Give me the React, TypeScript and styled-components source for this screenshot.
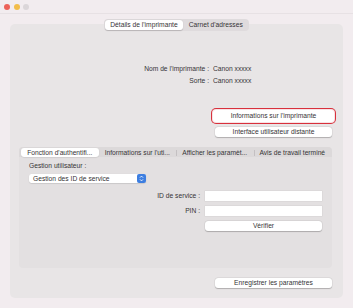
import styled, { createGlobalStyle } from "styled-components";

const GlobalStyle = createGlobalStyle`
  html, body {
    margin: 0;
    padding: 0;
  }
  body {
    width: 353px;
    height: 308px;
    overflow: hidden;
    background: #f2ecef;
    font-family: "Liberation Sans", Arial, sans-serif;
  }
`;

const Window = styled.div`
  width: 353px;
  height: 308px;
  display: flex;
  flex-direction: column;
  background: #f2ecef;
  color: #363436;
  font-size: 6.7px;
`;

const TitleBar = styled.div`
  flex: none;
  height: 14px;
  box-sizing: border-box;
  border-bottom: 1px solid #e7e1e4;
  display: flex;
  align-items: center;
  gap: 3.5px;
  padding-left: 4px;
`;

const Light = styled.span<{ $color: string }>`
  width: 6px;
  height: 6px;
  border-radius: 50%;
  background: ${(p) => p.$color};
`;

const Main = styled.div`
  flex: 1;
  display: flex;
  flex-direction: column;
  padding: 5px 10px 0 10px;
`;

const Segmented = styled.div`
  align-self: center;
  position: relative;
  z-index: 1;
  display: flex;
  height: 12px;
  box-sizing: border-box;
  padding: 1px;
  margin-bottom: -7px;
  border-radius: 4px;
  background: #dfdbdd;
`;

const Segment = styled.div<{ $active?: boolean }>`
  padding: 0 5.5px;
  line-height: 10px;
  border-radius: 3px;
  white-space: nowrap;
  background: ${(p) => (p.$active ? "#ffffff" : "transparent")};
  box-shadow: ${(p) => (p.$active ? "0 0.5px 1px rgba(0,0,0,0.18)" : "none")};
`;

const Panel = styled.div`
  height: 274px;
  box-sizing: border-box;
  border-radius: 5px;
  background: #e8e5e6;
  padding: 39px 11px 0 9px;
  display: flex;
  flex-direction: column;
`;

const InfoGrid = styled.div`
  display: grid;
  grid-template-columns: 190px auto;
  column-gap: 4px;
  line-height: 12px;
`;

const InfoLabel = styled.div`
  text-align: right;
`;

const ButtonStack = styled.div`
  align-self: flex-end;
  width: 117px;
  margin-top: 23px;
  display: flex;
  flex-direction: column;
  align-items: center;
  gap: 5px;
`;

const Button = styled.div<{ $focused?: boolean; $width?: number }>`
  width: ${(p) => (p.$focused ? "121px" : `${p.$width ?? 117}px`)};
  height: ${(p) => (p.$focused ? "12px" : "10px")};
  line-height: ${(p) => (p.$focused ? "12px" : "10px")};
  flex: none;
  text-align: center;
  white-space: nowrap;
  background: #ffffff;
  border-radius: 3px;
  box-shadow: ${(p) =>
    p.$focused
      ? "0 0 0 1px #f7e3e5, 0 0 0 2px #d8303c"
      : "0 0.5px 1px rgba(0,0,0,0.22), 0 0 0 0.5px rgba(0,0,0,0.06)"};
`;

const TabPanel = styled.div`
  margin-top: 10px;
  height: 121px;
  border-radius: 4px;
  background: #e3e0e1;
  display: flex;
  flex-direction: column;
  overflow: hidden;
`;

const TabBar = styled.div`
  flex: none;
  height: 10px;
  box-sizing: border-box;
  padding: 1px 1px 0 2px;
  background: #dcd9da;
  display: flex;
`;

const Tab = styled.div<{ $active?: boolean; $divider?: boolean }>`
  flex: 1;
  position: relative;
  text-align: center;
  line-height: 9px;
  white-space: nowrap;
  border-radius: 3px;
  background: ${(p) => (p.$active ? "#ffffff" : "transparent")};
  box-shadow: ${(p) => (p.$active ? "0 0.5px 1px rgba(0,0,0,0.15)" : "none")};
  &::before {
    content: "";
    display: ${(p) => (p.$divider ? "block" : "none")};
    position: absolute;
    left: 0;
    top: 2px;
    height: 6px;
    width: 1px;
    background: #c4c0c2;
  }
`;

const TabContent = styled.div`
  display: flex;
  flex-direction: column;
  padding: 3px 10px 0 10px;
`;

const SectionLabel = styled.div`
  line-height: 11px;
`;

const Popup = styled.div`
  margin-top: 3px;
  width: 117px;
  height: 9px;
  display: flex;
  align-items: center;
  justify-content: space-between;
  background: #ffffff;
  border-radius: 2.5px;
  box-shadow: 0 0.5px 1px rgba(0,0,0,0.2);
  padding-left: 4px;
  box-sizing: border-box;
`;

const Stepper = styled.span`
  width: 9px;
  height: 9px;
  border-radius: 2px;
  background: #3d7ee0;
  display: flex;
  align-items: center;
  justify-content: center;
`;

const FieldGrid = styled.div`
  margin-top: 8px;
  display: grid;
  grid-template-columns: 1fr 117px;
  column-gap: 5px;
  row-gap: 5px;
`;

const FieldLabel = styled.div`
  text-align: right;
  line-height: 10px;
`;

const Field = styled.div`
  height: 10px;
  background: #ffffff;
  box-shadow: 0 0 0 0.5px #d6d2d4;
`;

const Footer = styled.div`
  margin-top: 10px;
  align-self: flex-end;
`;

export default function App() {
  return (
    <Window>
      <GlobalStyle />
      <TitleBar>
        <Light $color="#ec6159" />
        <Light $color="#f2bd4b" />
        <Light $color="#dbd6d9" />
      </TitleBar>
      <Main>
        <Segmented>
          <Segment $active>Détails de l'imprimante</Segment>
          <Segment>Carnet d'adresses</Segment>
        </Segmented>
        <Panel>
          <InfoGrid>
            <InfoLabel>Nom de l'imprimante :</InfoLabel>
            <div>Canon xxxxx</div>
            <InfoLabel>Sorte :</InfoLabel>
            <div>Canon xxxxx</div>
          </InfoGrid>
          <ButtonStack>
            <Button $focused>Informations sur l'imprimante</Button>
            <Button>Interface utilisateur distante</Button>
          </ButtonStack>
          <TabPanel>
            <TabBar>
              <Tab $active>Fonction d'authentifi...</Tab>
              <Tab>Informations sur l'uti...</Tab>
              <Tab $divider>Afficher les paramèt...</Tab>
              <Tab $divider>Avis de travail terminé</Tab>
            </TabBar>
            <TabContent>
              <SectionLabel>Gestion utilisateur :</SectionLabel>
              <Popup>
                <span>Gestion des ID de service</span>
                <Stepper>
                  <svg width="5" height="7" viewBox="0 0 5 7">
                    <polyline points="1,2.6 2.5,1.1 4,2.6" fill="none" stroke="#fff" strokeWidth="0.9" />
                    <polyline points="1,4.4 2.5,5.9 4,4.4" fill="none" stroke="#fff" strokeWidth="0.9" />
                  </svg>
                </Stepper>
              </Popup>
              <FieldGrid>
                <FieldLabel>ID de service :</FieldLabel>
                <Field />
                <FieldLabel>PIN :</FieldLabel>
                <Field />
                <div />
                <Button>Vérifier</Button>
              </FieldGrid>
            </TabContent>
          </TabPanel>
          <Footer>
            <Button>Enregistrer les paramètres</Button>
          </Footer>
        </Panel>
      </Main>
    </Window>
  );
}
